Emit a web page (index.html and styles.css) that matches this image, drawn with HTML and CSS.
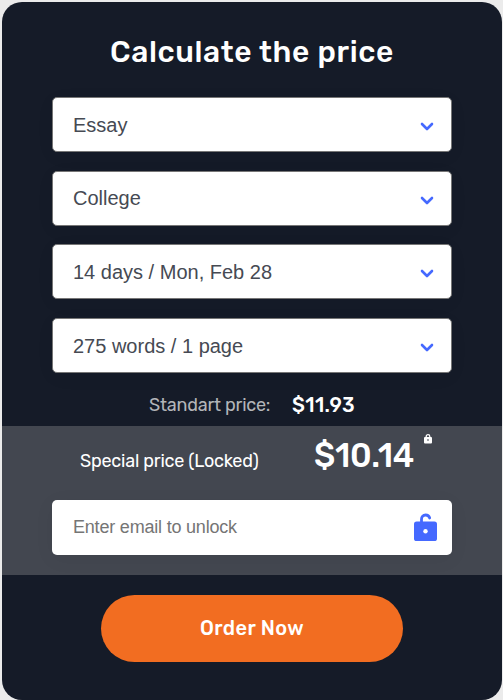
FILE: index.html
```html
<!DOCTYPE html>
<html lang="en">
<head>
<meta charset="utf-8">
<title>Calculate the price</title>
<link rel="stylesheet" href="styles.css">
</head>
<body>
<main class="card">
  <h1 class="title"><span>Calculate the price</span></h1>
  <div class="fields">
    <div class="field"><span>Essay</span><svg class="chevron" viewBox="0 0 14 10"><path d="M2 2l5 5 5-5"/></svg></div>
    <div class="field"><span>College</span><svg class="chevron" viewBox="0 0 14 10"><path d="M2 2l5 5 5-5"/></svg></div>
    <div class="field"><span>14 days / Mon, Feb 28</span><svg class="chevron" viewBox="0 0 14 10"><path d="M2 2l5 5 5-5"/></svg></div>
    <div class="field"><span>275 words / 1 page</span><svg class="chevron" viewBox="0 0 14 10"><path d="M2 2l5 5 5-5"/></svg></div>
  </div>
  <div class="standard"><span class="standard-label">Standart price:</span><span class="standard-value">$11.93</span></div>
  <section class="special">
    <div class="special-row">
      <span class="special-label">Special price (Locked)</span>
      <span class="special-value">$10.14</span>
      <svg class="lock" viewBox="0 0 8 10"><path class="shackle" d="M2.2 4V2.5a1.8 1.8 0 0 1 3.6 0V4"/><rect y="3" width="8" height="6.6" rx="1"/><circle cx="4" cy="6" r=".9"/></svg>
    </div>
    <label class="email">
      <input type="text" placeholder="Enter email to unlock">
      <svg class="unlock" viewBox="0 0 23 29"><path d="M7.5 9.5V6.2C7.5 3.6 9.1 2 11.6 2c2.1 0 3.5 1.1 4.1 3"/><rect y="8.5" width="23" height="19.5" rx="2.6"/><circle cx="11.5" cy="18.2" r="2.2"/></svg>
    </label>
  </section>
  <button class="order" type="button">Order Now</button>
</main>
</body>
</html>
```
FILE: styles.css
```css
* { box-sizing: border-box; }
body {
  margin: 0;
  padding: 2px 1px 0 2px;
  height: 700px;
  overflow: hidden;
  background: #ebebeb;
  font-family: Rubik, Roboto, sans-serif;
}
.card {
  height: 698px;
  border-radius: 20px;
  background: #151b28;
  color: #fff;
  display: flex;
  flex-direction: column;
  overflow: hidden;
}
.title {
  margin: 0;
  height: 95px;
  padding-top: 30px;
  font-size: 30px;
  line-height: 40px;
  font-weight: 500;
  letter-spacing: .63px;
  text-align: center;
}
.fields {
  display: flex;
  flex-direction: column;
  gap: 18.7px;
  padding: 0 50px;
}
.field {
  height: 55px;
  display: flex;
  align-items: center;
  justify-content: space-between;
  padding: 0 17.5px 0 20px;
  border: 1px solid #767676;
  border-radius: 5px;
  background: #fff;
  box-shadow: 0 4px 20px rgba(0, 0, 0, .04);
  color: #464a53;
  font: 20px "Liberation Sans", Arial, sans-serif;
}
.field span { padding-top: 1px; }
.chevron {
  width: 14px;
  height: 10px;
  margin-top: 5px;
  fill: none;
  stroke: #4569ff;
  stroke-width: 2.6;
  stroke-linecap: round;
  stroke-linejoin: round;
}
.standard {
  height: 53px;
  padding: 10px 0 0 147px;
  display: flex;
  align-items: center;
}
.standard-label {
  width: 143px;
  color: #b3b5b8;
  font-size: 18px;
  letter-spacing: -.22px;
  white-space: nowrap;
}
.standard-value {
  font-size: 20px;
  font-weight: 500;
  letter-spacing: .4px;
}
.special {
  height: 149px;
  padding: 0 50px;
  background: #434750;
}
.special-row {
  height: 74px;
  display: flex;
  align-items: flex-start;
  padding-left: 28px;
}
.special-label {
  width: 234px;
  margin-top: 23px;
  font-size: 18px;
  line-height: 24px;
  letter-spacing: -.22px;
  white-space: nowrap;
}
.special-value {
  width: 110px;
  margin-top: 10px;
  font-size: 33px;
  line-height: 40px;
  font-weight: 500;
  letter-spacing: -.2px;
}
.lock {
  flex: none;
  width: 8px;
  height: 10px;
  margin-top: 8px;
  fill: #fff;
}
.lock .shackle { fill: none; stroke: #fff; stroke-width: 1.3; }
.lock circle { fill: #777b82; }
.email {
  height: 55px;
  display: flex;
  align-items: center;
  padding: 0 15px 0 21px;
  border-radius: 5px;
  background: #fff;
  box-shadow: 0 4px 20px rgba(0, 0, 0, .05);
}
.email input {
  flex: 1;
  min-width: 0;
  height: 53px;
  padding: 0;
  border: 0;
  outline: 0;
  background: none;
  font: 18px "Liberation Sans", Arial, sans-serif;
  letter-spacing: -.2px;
}
.email input::placeholder { color: #757575; }
.unlock { width: 23px; height: 29px; fill: #4569ff; }
.unlock path { fill: none; stroke: #4569ff; stroke-width: 2.8; stroke-linecap: round; }
.unlock circle { fill: #fff; }
.order {
  width: 302px;
  height: 67px;
  margin: 20px auto 0;
  padding: 0 0 1px;
  border: 0;
  border-radius: 34px;
  background: #f26d21;
  color: #fff;
  font: 500 20px Rubik, Roboto, sans-serif;
  letter-spacing: .4px;
}
```
